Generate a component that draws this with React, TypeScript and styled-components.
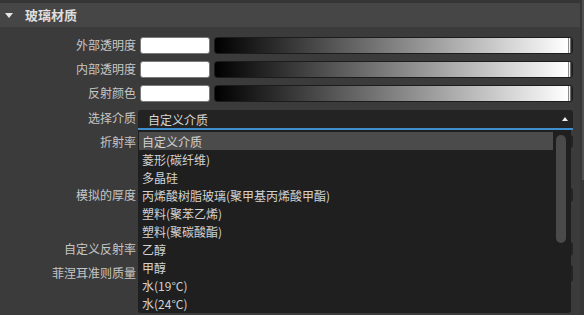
import React from 'react';
import styled, { createGlobalStyle } from 'styled-components';

const GlobalStyle = createGlobalStyle`
  html, body {
    margin: 0;
    padding: 0;
    background: #3b3b3b;
    overflow: hidden;
  }
  body {
    font-family: "Noto Sans CJK SC", "Noto Sans", sans-serif;
  }
`;

const Page = styled.div`
  display: flex;
  width: 584px;
  height: 315px;
  overflow: hidden;
  background: #3b3b3b;
`;

const Main = styled.div`
  flex: 1;
  display: flex;
  flex-direction: column;
`;

const TopStrip = styled.div`
  height: 3px;
  background: #353535;
`;

const PageScroll = styled.div`
  width: 4px;
  background: #363636;
  display: flex;
  justify-content: flex-end;
`;

const PageThumb = styled.div`
  width: 2px;
  height: 180px;
  background: #505050;
`;

const Header = styled.div`
  height: 24px;
  background: #464646;
  display: flex;
  align-items: center;
  padding-left: 5px;
  gap: 12px;
`;

const Caret = styled.span`
  width: 0;
  height: 0;
  border-left: 4px solid transparent;
  border-right: 4px solid transparent;
  border-top: 5px solid #e6e6e6;
`;

const Title = styled.span`
  font-size: 13px;
  font-weight: bold;
  color: #dedede;
  line-height: 16px;
`;

const Body = styled.div`
  padding-top: 6px;
  display: flex;
  flex-direction: column;
`;

const Row = styled.div<{ $h: number }>`
  display: flex;
  align-items: center;
  height: ${p => p.$h}px;
  padding-right: 7px;
  gap: 4px;
`;

const Label = styled.div`
  width: 136px;
  flex: none;
  text-align: right;
  font-size: 12px;
  line-height: 16px;
  color: #c6c6c6;
`;

const Swatch = styled.div`
  width: 68px;
  height: 15px;
  flex: none;
  background: #ffffff;
  border: 1px solid #7a7a7a;
  border-radius: 3px;
`;

const Bar = styled.div`
  flex: 1;
  height: 15px;
  display: flex;
  border: 1px solid #1c1c1c;
  border-radius: 3px;
  overflow: hidden;
`;

const Ramp = styled.div`
  flex: 1;
  background: linear-gradient(to right, #000000, #ffffff);
`;

const Handle = styled.div`
  width: 4px;
  background: linear-gradient(to right, #8c8c8c 0 1px, #f2f2f2 1px 2px, #6a6a6a 2px 3px, #2a2a2a 3px);
`;

const SelectWrap = styled.div`
  position: relative;
  flex: 1;
  margin-left: -2px;
  align-self: flex-end;
`;

const SelectBox = styled.div`
  height: 18px;
  background: #232323;
  border-radius: 3px 3px 0 0;
  border-bottom: 2px solid #3f8fcf;
  display: flex;
  align-items: center;
  justify-content: space-between;
  padding: 0 5px 0 10px;
  font-size: 12px;
  color: #d6d6d6;
`;

const UpArrow = styled.span`
  width: 0;
  height: 0;
  border-left: 3px solid transparent;
  border-right: 3px solid transparent;
  border-bottom: 4px solid #f0f0f0;
`;

const Dropdown = styled.div`
  position: absolute;
  top: 100%;
  left: 0;
  width: calc(100% - 2px);
  height: 183px;
  box-sizing: border-box;
  padding: 2px 1px 1px;
  background: #1f1f1f;
  border-radius: 0 0 3px 3px;
  display: flex;
  z-index: 10;
`;

const Items = styled.div`
  flex: 1;
  display: flex;
  flex-direction: column;
`;

const Item = styled.div<{ $active?: boolean }>`
  height: 18px;
  display: flex;
  align-items: center;
  padding-left: 3px;
  font-size: 12px;
  color: #d2d2d2;
  white-space: nowrap;
  background: ${p => (p.$active ? '#4b4b4b' : 'transparent')};
`;

const Track = styled.div`
  width: 17px;
  flex: none;
  padding: 3px 4px 0 3px;
  box-sizing: border-box;
`;

const Thumb = styled.div`
  height: 108px;
  border-radius: 5px;
  background: #4a4a4a;
`;

const Field = styled.div<{ $h: number }>`
  flex: 1;
  height: ${p => p.$h}px;
  background: #242424;
  border-radius: 3px;
`;

const media = [
  '自定义介质',
  '菱形(碳纤维)',
  '多晶硅',
  '丙烯酸树脂玻璃(聚甲基丙烯酸甲酯)',
  '塑料(聚苯乙烯)',
  '塑料(聚碳酸酯)',
  '乙醇',
  '甲醇',
  '水(19°C)',
  '水(24°C)',
];

const colorRows = ['外部透明度', '内部透明度', '反射颜色'];

const App = () => {
  return (
    <>
      <GlobalStyle />
      <Page>
        <Main>
          <TopStrip />
          <Header>
            <Caret />
            <Title>玻璃材质</Title>
          </Header>
          <Body>
            {colorRows.map(name => (
              <Row key={name} $h={24}>
                <Label>{name}</Label>
                <Swatch />
                <Bar>
                  <Ramp />
                  <Handle />
                </Bar>
              </Row>
            ))}
            <Row $h={25}>
              <Label>选择介质</Label>
              <SelectWrap>
                <SelectBox>
                  <span>自定义介质</span>
                  <UpArrow />
                </SelectBox>
                <Dropdown>
                  <Items>
                    {media.map((m, i) => (
                      <Item key={m} $active={i === 0}>{m}</Item>
                    ))}
                  </Items>
                  <Track>
                    <Thumb />
                  </Track>
                </Dropdown>
              </SelectWrap>
            </Row>
            <Row $h={23}>
              <Label>折射率</Label>
              <Field $h={13} />
            </Row>
            <Row $h={84}>
              <Label>模拟的厚度</Label>
              <Field $h={14} />
            </Row>
            <Row $h={24}>
              <Label>自定义反射率</Label>
              <Field $h={14} />
            </Row>
            <Row $h={24}>
              <Label>菲涅耳准则质量</Label>
              <Field $h={17} />
            </Row>
          </Body>
        </Main>
        <PageScroll>
          <PageThumb />
        </PageScroll>
      </Page>
    </>
  );
};

export default App;
